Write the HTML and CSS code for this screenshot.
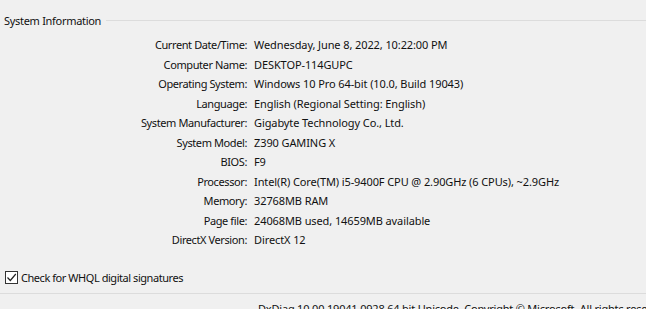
FILE: index.html
```html
<html>
<head>
<meta charset="utf-8">
<title>System Information</title>
<link rel="stylesheet" href="styles.css">
</head>
<body>

<div class="group">
  <div class="legend"><span>System Information</span><div class="rule"></div></div>
  <div class="info">
    <div class="lbl">Current Date/Time:</div><div class="val">Wednesday, June 8, 2022, 10:22:00 PM</div>
    <div class="lbl">Computer Name:</div><div class="val">DESKTOP-114GUPC</div>
    <div class="lbl">Operating System:</div><div class="val">Windows 10 Pro 64-bit (10.0, Build 19043)</div>
    <div class="lbl">Language:</div><div class="val">English (Regional Setting: English)</div>
    <div class="lbl">System Manufacturer:</div><div class="val">Gigabyte Technology Co., Ltd.</div>
    <div class="lbl">System Model:</div><div class="val">Z390 GAMING X</div>
    <div class="lbl">BIOS:</div><div class="val">F9</div>
    <div class="lbl">Processor:</div><div class="val">Intel(R) Core(TM) i5-9400F CPU @ 2.90GHz (6 CPUs), ~2.9GHz</div>
    <div class="lbl">Memory:</div><div class="val">32768MB RAM</div>
    <div class="lbl">Page file:</div><div class="val">24068MB used, 14659MB available</div>
    <div class="lbl">DirectX Version:</div><div class="val">DirectX 12</div>
  </div>
</div>

<div class="check">
  <span class="box"><svg width="11" height="11" viewBox="0 0 11 11"><path d="M1.5 5.5 L4.3 8.5 L9.8 2" fill="none" stroke="#222" stroke-width="1.2"/></svg></span>
  <span class="caption">Check for WHQL digital signatures</span>
</div>

<div class="sep"></div>
<div class="footer">DxDiag 10.00.19041.0928 64 bit Unicode&nbsp; Copyright © Microsoft. All rights reserved.</div>

</body>
</html>
```

FILE: styles.css
```css
body {
	margin: 0;
	background: #F0F0F0;
	font-family: 'Noto Sans', sans-serif;
	font-size: 11px;
	color: #111111;
	width: 646px;
	height: 309px;
	overflow: hidden;
}
.legend {
	display: flex;
	align-items: center;
	height: 19px;
	padding: 11px 0 0 4px;
}
.legend span {
	letter-spacing: -0.3px;
}
.legend .rule {
	flex: 1;
	height: 1px;
	background: #DCDCDC;
	margin-left: 5px;
}
.info {
	display: grid;
	grid-template-columns: 247px auto;
	column-gap: 7px;
	line-height: 19.5px;
	margin-top: 5px;
}
.lbl {
	text-align: right;
	letter-spacing: -0.4px;
}
.val {
	letter-spacing: -0.1px;
}
.check {
	display: flex;
	align-items: center;
	margin: 21px 0 0 5px;
	height: 14px;
}
.caption {
	letter-spacing: -0.45px;
}
.box {
	width: 11px;
	height: 11px;
	border: 1px solid #333333;
	background: #FFFFFF;
	margin-right: 3px;
	display: flex;
}
.sep {
	height: 1px;
	background: #DCDCDC;
	margin-top: 8px;
}
.footer {
	padding: 7px 0 0 258px;
	white-space: nowrap;
	letter-spacing: -0.2px;
}
```
